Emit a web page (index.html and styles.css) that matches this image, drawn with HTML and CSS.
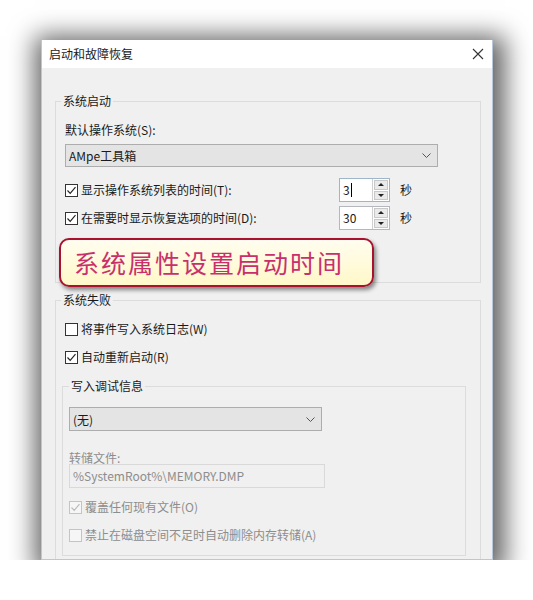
FILE: index.html
```html
<!DOCTYPE html>
<html lang="zh-CN">
<head>
<meta charset="utf-8">
<title>启动和故障恢复</title>
<link rel="stylesheet" href="styles.css">
</head>
<body>
<div class="dialog">
  <div class="titlebar">
    <span class="title">启动和故障恢复</span>
    <svg class="close" width="12" height="12" viewBox="0 0 12 12"><path d="M1 1L11 11M11 1L1 11" stroke="#333" stroke-width="1.1" fill="none"/></svg>
  </div>
  <div class="body">
    <fieldset class="group g1">
      <legend>系统启动</legend>
      <div class="label first">默认操作系统(S):</div>
      <div class="combo wide"><span>AMpe工具箱</span><svg class="chev" width="9" height="5" viewBox="0 0 9 5"><path d="M0.5 0.5L4.5 4.5L8.5 0.5" stroke="#555" fill="none"/></svg></div>
      <div class="spinrow r1">
        <div class="check"><span class="box"><svg width="11" height="11" viewBox="0 0 11 11"><path d="M1.5 5.5L4.2 8.3L9.5 2.2" stroke="#222" stroke-width="1.2" fill="none"/></svg></span><span>显示操作系统列表的时间(T):</span></div>
        <div class="spin focus"><span class="val">3<i class="caret"></i></span><span class="btns"><b class="up"></b><b class="down"></b></span></div>
        <span class="unit">秒</span>
      </div>
      <div class="spinrow r2">
        <div class="check"><span class="box"><svg width="11" height="11" viewBox="0 0 11 11"><path d="M1.5 5.5L4.2 8.3L9.5 2.2" stroke="#222" stroke-width="1.2" fill="none"/></svg></span><span>在需要时显示恢复选项的时间(D):</span></div>
        <div class="spin"><span class="val">30</span><span class="btns"><b class="up"></b><b class="down"></b></span></div>
        <span class="unit">秒</span>
      </div>
    </fieldset>

    <fieldset class="group g2">
      <legend>系统失败</legend>
      <div class="check row c1"><span class="box"></span><span>将事件写入系统日志(W)</span></div>
      <div class="check row c2"><span class="box"><svg width="11" height="11" viewBox="0 0 11 11"><path d="M1.5 5.5L4.2 8.3L9.5 2.2" stroke="#222" stroke-width="1.2" fill="none"/></svg></span><span>自动重新启动(R)</span></div>
      <fieldset class="group inner">
        <legend>写入调试信息</legend>
        <div class="combo narrow"><span>(无)</span><svg class="chev" width="9" height="5" viewBox="0 0 9 5"><path d="M0.5 0.5L4.5 4.5L8.5 0.5" stroke="#555" fill="none"/></svg></div>
        <div class="label dis dumplabel">转储文件:</div>
        <div class="field">%SystemRoot%\MEMORY.DMP</div>
        <div class="check row dis c3"><span class="box"><svg width="11" height="11" viewBox="0 0 11 11"><path d="M1.5 5.5L4.2 8.3L9.5 2.2" stroke="#bbb" stroke-width="1.2" fill="none"/></svg></span><span>覆盖任何现有文件(O)</span></div>
        <div class="check row dis c4"><span class="box"></span><span>禁止在磁盘空间不足时自动删除内存转储(A)</span></div>
      </fieldset>
    </fieldset>
  </div>
  <div class="callout">系统属性设置启动时间</div>
</div>
</body>
</html>
```

FILE: styles.css
```css
html, body {
  margin: 0;
  padding: 0;
  background: #ffffff;
}
body {
  font-family: "Noto Sans CJK SC", "Microsoft YaHei", sans-serif;
  font-size: 12px;
  color: #1a1a1a;
  padding-top: 40px;
  padding-left: 41px;
}
.dialog {
  position: relative;
  width: 452px;
  height: 520px;
  box-sizing: border-box;
  border: 1px solid #b8c8d8;
  border-top: none;
  background: #f0f0f0;
  overflow: hidden;
  box-shadow: 3px 5px 24px 9px rgba(0, 0, 0, 0.62);
}
.titlebar {
  height: 28px;
  background: #fff;
  display: flex;
  align-items: center;
  justify-content: space-between;
  padding: 0 8px 0 7px;
}
.title {
  line-height: 16px;
}
.body {
  padding-top: 25px;
}
.group {
  border: 1px solid #dcdcdc;
  margin: 0 11px 0 13px;
  padding: 0 9px;
  min-width: 0;
}
.group legend {
  padding: 0 2px;
  margin-left: -4px;
  line-height: 16px;
}
.g1 {
  padding-bottom: 52px;
}
.label {
  line-height: 16px;
}
.label.first {
  margin-top: 13px;
}
.combo {
  box-sizing: border-box;
  height: 23px;
  background: #e4e4e4;
  border: 1px solid #adadad;
  display: flex;
  align-items: center;
  justify-content: space-between;
  padding: 0 6px 0 3px;
  margin-top: 6px;
}
.combo.wide {
  width: 373px;
}
.combo.narrow {
  width: 253px;
  height: 24px;
  margin-top: 13px;
}
.spinrow {
  display: flex;
  align-items: center;
  height: 24px;
}
.spinrow.r1 {
  margin-top: 11px;
}
.spinrow.r2 {
  margin-top: 4px;
}
.spinrow .check {
  width: 274px;
}
.check {
  display: flex;
  align-items: center;
  gap: 3px;
  line-height: 16px;
}
.box {
  box-sizing: border-box;
  width: 13px;
  height: 13px;
  border: 1px solid #333;
  background: #fff;
  display: flex;
  align-items: center;
  justify-content: center;
  flex: none;
}
.dis {
  color: #8d8d8d;
}
.dis .box {
  border-color: #c4c4c4;
  background: #f6f6f6;
}
.row {
  height: 16px;
}
.c1 { margin-top: 13px; }
.c2 { margin-top: 12px; }
.c3 { margin-top: 11px; }
.c4 { margin-top: 12px; }
.spin {
  box-sizing: border-box;
  width: 51px;
  height: 24px;
  border: 1px solid #b4b8bd;
  background: #fff;
  display: flex;
}
.spin.focus {
  border-color: #9fb6c9;
}
.val {
  flex: 1;
  padding-left: 3px;
  line-height: 22px;
  display: flex;
  align-items: center;
}
.caret {
  display: inline-block;
  width: 1px;
  height: 14px;
  background: #000;
  margin-left: 1px;
}
.btns {
  width: 16px;
  display: flex;
  flex-direction: column;
  border-left: 1px solid #d0d0d0;
}
.btns b {
  flex: 1;
  background: #eaeaea;
  border: 1px solid #c8c8c8;
  margin: 1px 1px 0 1px;
  position: relative;
}
.btns b.down {
  margin-bottom: 1px;
}
.btns b::after {
  content: "";
  position: absolute;
  left: 50%;
  top: 50%;
  margin-left: -3px;
  border-left: 3px solid transparent;
  border-right: 3px solid transparent;
}
.btns b.up::after {
  margin-top: -2px;
  border-bottom: 3px solid #222;
}
.btns b.down::after {
  margin-top: -1px;
  border-top: 3px solid #222;
}
.unit {
  margin-left: 10px;
  line-height: 16px;
}
.g2 {
  margin-top: 9px;
  padding-bottom: 20px;
}
.inner {
  margin: 13px 0 0 -3px;
  width: 404px;
  box-sizing: border-box;
  padding: 0 6px 12px 6px;
}
.inner legend {
  margin-left: 0;
}
.dumplabel {
  line-height: 12px;
  margin-top: 21px;
}
.field {
  box-sizing: border-box;
  width: 256px;
  height: 24px;
  border: 1px solid #d9d9d9;
  background: #f0f0f0;
  color: #8d8d8d;
  padding-left: 3px;
  line-height: 22px;
}
.callout {
  position: absolute;
  left: 17px;
  top: 198px;
  width: 315px;
  height: 49px;
  box-sizing: border-box;
  border: 2px solid #a8122e;
  border-radius: 10px;
  background: linear-gradient(#fffdf0, #fff8c8);
  box-shadow: 2px 3px 4px rgba(0, 0, 0, 0.45);
  color: #c8306c;
  font-size: 25px;
  letter-spacing: 2px;
  line-height: 45px;
  padding-left: 13px;
  white-space: nowrap;
}
```
